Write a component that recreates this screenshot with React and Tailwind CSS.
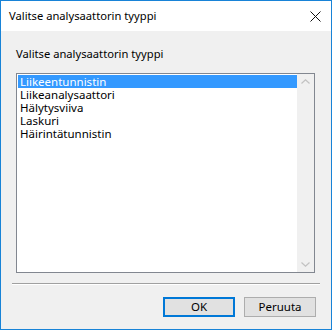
import React, { useState } from 'react';

const ITEMS = ['Liikeentunnistin', 'Liikeanalysaattori', 'Hälytysviiva', 'Laskuri', 'Häirintätunnistin'];

const UI = { fontFamily: '"Noto Sans", "Liberation Sans", sans-serif' };

export default function App() {
  const [sel, setSel] = useState(0);

  return (
    <div className="w-[332px] h-[330px] border border-[#1883d7] bg-[#f0f0f0] flex flex-col text-black" style={UI}>
      {/* title bar */}
      <div className="h-[30px] bg-white flex items-center justify-between pl-[8px] pr-[10px]">
        <span className="text-[11.2px] leading-none">Valitse analysaattorin tyyppi</span>
        <svg width="11" height="11" viewBox="0 0 11 11" className="mt-[1px]">
          <path d="M0.5 0.5 L10.5 10.5 M10.5 0.5 L0.5 10.5" stroke="#111" strokeWidth="1" />
        </svg>
      </div>

      <div className="flex-1 flex flex-col px-[15px]">
        <div className="text-[11.2px] leading-none mt-[17px] mb-[14px]">Valitse analysaattorin tyyppi</div>

        <div className="h-[200px] mr-[1px] border border-[#828790] bg-white flex">
          <div className="flex-1 pt-[1px] pl-[1px]">
            {ITEMS.map((it, i) => (
              <div
                key={it}
                onClick={() => setSel(i)}
                className={`h-[13px] leading-[13px] text-[11.5px] pl-[2px] ${i === sel ? 'bg-[#3399ff] text-white' : ''}`}
              >
                {it}
              </div>
            ))}
          </div>
          <div className="w-[17px] bg-[#f0f0f0] flex flex-col justify-between items-center py-[5px]">
            <svg width="9" height="5" viewBox="0 0 9 5">
              <path d="M0.5 4.5 L4.5 0.8 L8.5 4.5" fill="none" stroke="#c2c2c2" strokeWidth="1.2" />
            </svg>
            <svg width="9" height="5" viewBox="0 0 9 5">
              <path d="M0.5 0.5 L4.5 4.2 L8.5 0.5" fill="none" stroke="#c2c2c2" strokeWidth="1.2" />
            </svg>
          </div>
        </div>

        <div className="mt-[10px] -mx-[4px] h-[2px] border-t border-[#a0a0a0] border-b-white border-b" />

        <div className="flex justify-end gap-[9px] mt-[12px]">
          <button className="w-[72px] h-[20px] border-2 border-[#0078d7] bg-[#e1e1e1] text-[11.5px] leading-none">OK</button>
          <button className="w-[72px] h-[20px] border border-[#adadad] bg-[#e1e1e1] text-[11.5px] leading-none">Peruuta</button>
        </div>
      </div>
    </div>
  );
}
